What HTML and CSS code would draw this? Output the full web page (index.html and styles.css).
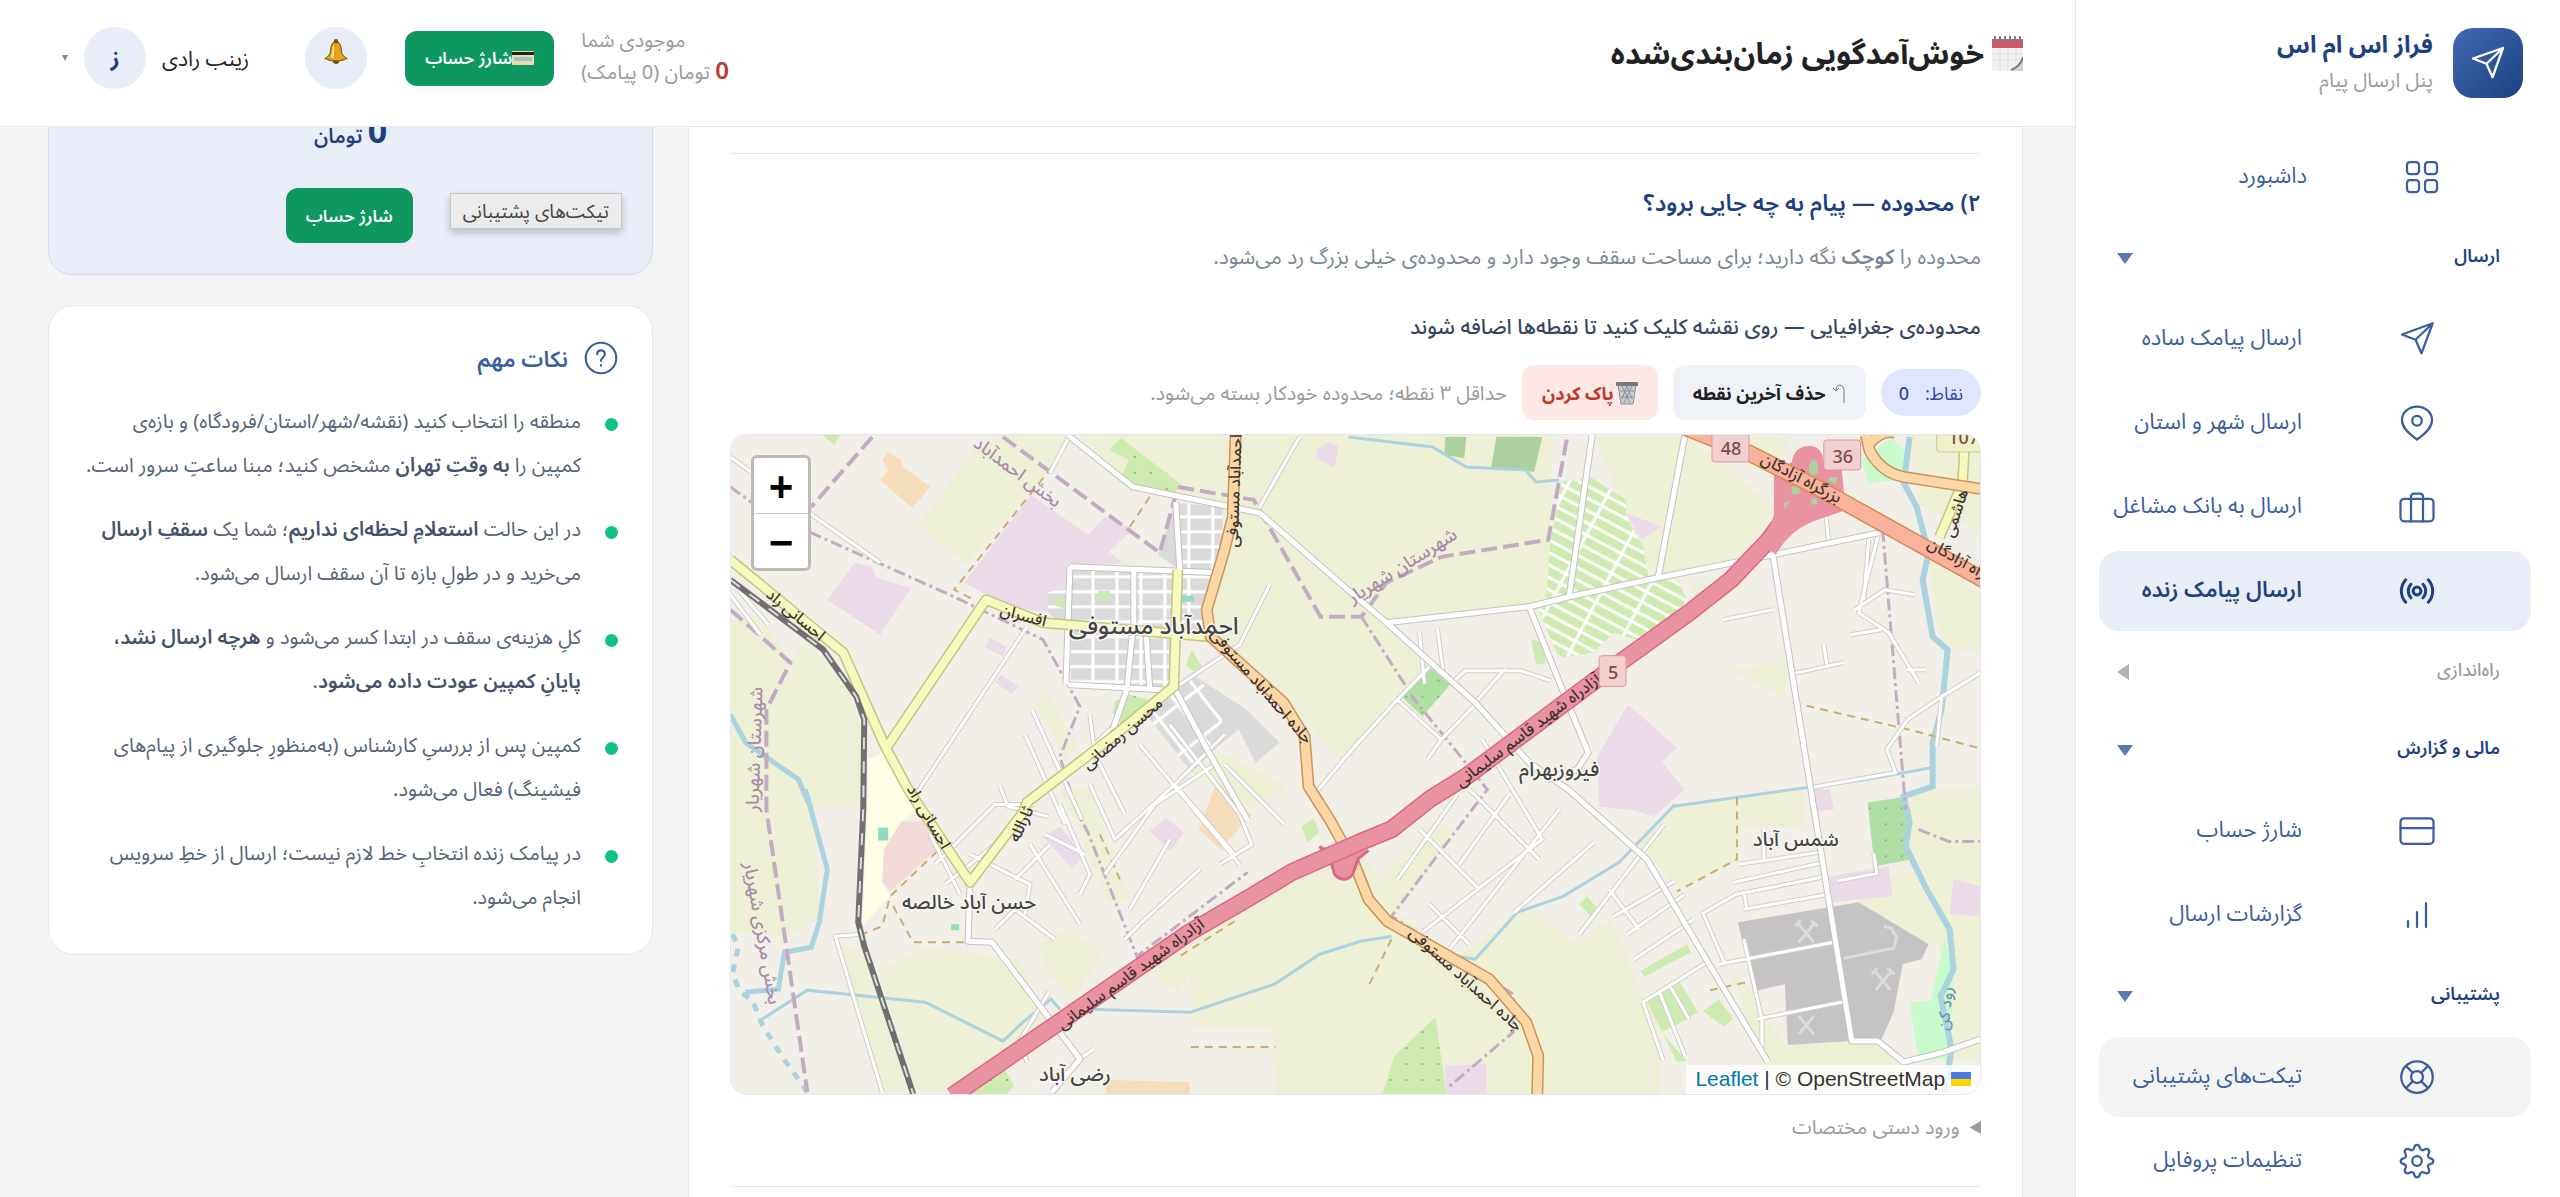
FILE: index.html
```html
<!DOCTYPE html>
<html lang="fa" dir="rtl">
<head>
    <meta charset="utf-8">
    <title>خوش‌آمدگویی زمان‌بندی‌شده</title>
    <meta name="viewport" content="width=device-width, initial-scale=1">
    <link rel="stylesheet" href="styles.css">
</head>
<body>
    <aside class="sidebar">
        <div class="brand">
            <div class="brand-logo">
                <svg viewBox="0 0 24 24" class="icon"><path d="M22 2 2 9l9 3.500 4 9z M22 2 11 12.500"/></svg>
            </div>
            <div>
                <div class="brand-name">فراز اس ام اس</div>
                <div class="brand-sub">پنل ارسال پیام</div>
            </div>
        </div>

        <nav class="nav">
            <a href="#" class="nav-item nav-home">
                <svg viewBox="0 0 24 24" class="icon"><rect x="2" y="2" width="8" height="8" rx="2"/><rect x="14" y="2" width="8" height="8" rx="2"/><rect x="2" y="14" width="8" height="8" rx="2"/><rect x="14" y="14" width="8" height="8" rx="2"/></svg>
                <span>داشبورد</span>
            </a>

            <button type="button" class="nav-group"><span>ارسال</span><i class="caret"></i></button>
            <a href="#" class="nav-item">
                <svg viewBox="0 0 24 24" class="icon"><path d="M22.500 1.500 2 9l9 3.500 4 9z M22.500 1.500 11 12.500"/></svg>
                <span>ارسال پیامک ساده</span>
            </a>
            <a href="#" class="nav-item">
                <svg viewBox="0 0 24 24" class="icon"><path d="M12 23c5-3.500 10-7.500 10-13a10 9 0 0 0-20 0c0 5.500 5 9.500 10 13z"/><circle cx="12" cy="10.500" r="3.200"/></svg>
                <span>ارسال شهر و استان</span>
            </a>
            <a href="#" class="nav-item">
                <svg viewBox="0 0 24 24" class="icon"><rect x="1" y="6.500" width="22" height="15" rx="2.500"/><path d="M8 21.500V5a2 2 0 0 1 2-2h4a2 2 0 0 1 2 2v16.500"/></svg>
                <span>ارسال به بانک مشاغل</span>
            </a>
            <a href="#" class="nav-item active">
                <svg viewBox="0 0 24 24" class="icon"><circle cx="12" cy="12" r="2.600"/><path d="M8 7.500a6.500 6.500 0 0 0 0 9M16 7.500a6.500 6.500 0 0 1 0 9M4.500 4.500a11 11 0 0 0 0 15M19.500 4.500a11 11 0 0 1 0 15"/></svg>
                <span>ارسال پیامک زنده</span>
            </a>

            <button type="button" class="nav-group closed"><span>راه‌اندازی</span><i class="caret"></i></button>

            <button type="button" class="nav-group"><span>مالی و گزارش</span><i class="caret"></i></button>
            <a href="#" class="nav-item">
                <svg viewBox="0 0 24 24" class="icon"><rect x="1" y="3.500" width="22" height="17" rx="2.500"/><path d="M1 10h22"/></svg>
                <span>شارژ حساب</span>
            </a>
            <a href="#" class="nav-item">
                <svg viewBox="0 0 24 24" class="icon"><path d="M18 4v16M12 10v10M6 16v4"/></svg>
                <span>گزارشات ارسال</span>
            </a>

            <button type="button" class="nav-group"><span>پشتیبانی</span><i class="caret"></i></button>
            <a href="#" class="nav-item hover">
                <svg viewBox="0 0 24 24" class="icon"><circle cx="12" cy="12" r="10.500"/><circle cx="12" cy="12" r="4"/><path d="m4.700 4.700 4.400 4.400M14.900 9.100l4.400-4.400M14.900 14.900l4.400 4.400M9.100 14.900l-4.400 4.400"/></svg>
                <span>تیکت‌های پشتیبانی</span>
            </a>
            <a href="#" class="nav-item">
                <svg viewBox="0 0 24 24" class="icon"><circle cx="12" cy="12" r="3.200"/><path d="M10 3.500c.5-3 3.500-3 4 0 .3 1.200 1.600 1.700 2.600 1 2.600-1.600 4.500.4 3 3-.7 1-.1 2.300 1 2.600 3 .6 3 3.400 0 4-1.100.3-1.700 1.500-1 2.600 1.500 2.600-.4 4.500-3 3-1-.7-2.300-.1-2.600 1-.6 3-3.400 3-4 0-.3-1.100-1.500-1.700-2.600-1-2.600 1.500-4.500-.4-3-3 .7-1 .1-2.300-1-2.600-3-.6-3-3.400 0-4 1.100-.3 1.700-1.500 1-2.600-1.500-2.600.4-4.600 3-3 1 .7 2.300.2 2.600-1z"/></svg>
                <span>تنظیمات پروفایل</span>
            </a>
        </nav>
    </aside>

    <div class="page">
        <header class="topbar">
            <h1 class="page-title">
                <svg viewBox="0 0 31 35" class="calendar"><path fill="#f0f1f1" d="M0 6h31v29H0z"/><path fill="#cf5867" d="M0 3h31v9H0z"/><path stroke="#6d8397" stroke-width="2" d="M3 0v6M8 0v6M13 0v6M18 0v6M23 0v6M28 0v6"/><path stroke="#dcdfe1" d="M0 18h31M0 24h31M8 13v21M16 13v21M24 13v21"/><path fill="#cfd2d4" d="M31 22 20 35h11z"/><path stroke="#777" stroke-width="2" d="M31 21c-2 8-6 10-12 13"/></svg>
                خوش‌آمدگویی زمان‌بندی‌شده
            </h1>
            <div class="account">
                <div class="credit">
                    <div>موجودی شما</div>
                    <div><b>0</b> تومان (0 پیامک)</div>
                </div>
                <button type="button" class="btn btn-green">
                    <svg viewBox="0 0 22 14" class="card-icon"><rect width="22" height="14" rx="1" fill="#e6dfa9"/><path fill="#222" d="M0 1h22v3H0z"/><path fill="#a6c0cf" d="M2 6h18v4H2z"/></svg>شارژ حساب
                </button>
                <button type="button" class="bell" aria-label="اعلان‌ها">
                    <svg viewBox="0 0 24 24"><path fill="#e3a21a" stroke="#8a5a12" d="M12 2c-4 1-5 5-5 9 0 3-2 5-5 7 5 3 15 3 20 0-3-2-5-4-5-7 0-4-1-8-5-9z"/><path fill="#fbe08a" d="M10 5c-2 3-1 8-3 12l3 1c0-4 1-9 0-13z"/><circle cx="12" cy="2" r="2" fill="#7a4c10"/><path fill="#7a4c10" d="M9 20h6c0 4-6 4-6 0z"/></svg>
                </button>
                <button type="button" class="user">
                    <span>زینب رادی</span>
                    <span class="avatar">ز</span>
                    <i class="user-caret"></i>
                </button>
            </div>
        </header>

        <div class="content">
            <main class="panel">
                <section class="step">
                    <h2>۲) محدوده — پیام به چه جایی برود؟</h2>
                    <p class="lead">محدوده را <b>کوچک</b> نگه دارید؛ برای مساحت سقف وجود دارد و محدوده‌ی خیلی بزرگ رد می‌شود.</p>
                    <p class="map-label">محدوده‌ی جغرافیایی — روی نقشه کلیک کنید تا نقطه‌ها اضافه شوند</p>
                    <div class="tools">
                        <span class="badge">نقاط: <b>0</b></span>
                        <button type="button" class="btn btn-soft">
                            <svg viewBox="0 0 14 20" class="undo"><path d="M12 20V7c0-6-8-7-8 0M1 5l3 3 3-3"/></svg>حذف آخرین نقطه
                        </button>
                        <button type="button" class="btn btn-danger">
                            <svg viewBox="0 0 22 24" class="trash"><path fill="#c9cdd0" stroke="#8b9094" d="m2 4 3 19h12l3-19z"/><path stroke="#8b9094" d="m6 5 8 17M11 5l5 13M16 5 8 22M11 5 6 18M4 10h14M5 16h12"/><rect x="0" y="1" width="22" height="4" rx="1" fill="#73797e"/></svg>پاک کردن
                        </button>
                        <span class="hint">حداقل ۳ نقطه؛ محدوده خودکار بسته می‌شود.</span>
                    </div>

                    <div class="map">
                        <svg class="map-canvas" viewBox="0 0 1252 660" preserveAspectRatio="xMidYMid slice">
                            <defs>
                                <pattern id="dots" width="16" height="16" patternUnits="userSpaceOnUse"><circle cx="5" cy="6" r="1" fill="#6fae5f"/></pattern>
                                <pattern id="streets" width="24" height="15" patternUnits="userSpaceOnUse"><path d="M0 7h24M3 0v15" stroke="#fff" stroke-width="3"/></pattern>
                                <pattern id="plots" width="40" height="11" patternUnits="userSpaceOnUse" patternTransform="rotate(28)"><path d="M0 5h40M4 0v11" stroke="#fff" stroke-width="3"/></pattern>
                                <pattern id="lanes" width="40" height="24" patternUnits="userSpaceOnUse" patternTransform="rotate(52)"><path d="M0 5h40M9 0v24" stroke="#fff" stroke-width="3"/></pattern>
                            </defs>
                            <rect width="1252" height="660" fill="#f2efe9"/>

                            <!-- farmland -->
                            <g fill="#eef0d5">
                                <path d="M187 90 243 17 270 0h75l-30 40-22 26-57 64zM350 0h155v82l-58-20-44-10z"/>
                                <path d="M505 0h317v165l-17 10-145 15 40 45-30 35-59 58-36-43-88-83-6-30 26-80z"/>
                                <path d="M0 185l30-5 30 48 15-23 43 50 14 45-2 72H85v43l6 67-35 20-56-4z"/>
                                <path d="M147 535l48-22 95 12 15 37 15 23-20 25-87 48h-26zM110 508l24 14 44 136h-26z"/>
                                <path d="M631 418 545 455 466 490l-11 25-44 15 36 28 14-18v52l81 3 4 65h384v-35l2-25-17-40-35-75-32 25-43-35-15 3-65 47-60-50z"/>
                                <path d="M910 408l36-36 60-9 69-8v37h-64v33l-61 30-32-35zM706 387l19 8-57 85-23-30z"/>
                                <path d="M1000 530l20 25 37 57 98-7 25 50h-140zM1180 355h72v270h-30l-5-80-19-90-18-40zM1130 468l35-30 20 0 31 65-20 10z"/>
                                <path d="M865 2h95l85 68-15 30-25 30-80 15zM1180 0h72v98l-62-28zM1000 235l58-8v37z"/>
                                <path d="M310 510l28-16 36 24-30 45-25-20zM460 338l29-20 69 34-36 23zM305 270l12-10 30 50-12 16zM330 355h30l40 110-20 5z"/>
                                <path d="M962 2h100l-20 40-40-20zM1200 120l52 40v60l-40-10zM960 150l50 0-35 35z"/>
                            </g>

                            <!-- built-up and industrial areas -->
                            <g fill="#ebdbe8">
                                <path d="M301 60l57 40 17-18 28 13-24 22 14 11-53 4-4 20-18 6v20l-41-6-43-24zM124 128l18 4 4 11 35 10-31 47-53-35z"/>
                                <path d="M260 203l17 9-4 10-18-10zM271 240l17 12-6 8-17-12zM897 78l36 14-21 13zM899 270l49 43-15 15 23 27-31 27-20-6-35-4-2-50z"/>
                                <path d="M1100 442l60-10 4 30-60 6zM1225 445l27 7v30l-31-2zM716 632l41-2v30h-40zM436 383l18 15-14 19-20-20zM330 392l24 30-12 12-29-32zM587 15l12-8 10 4-4 22-18-10zM1085 355h16l4 20-18 2z"/>
                            </g>
                            <g fill="#dadada">
                                <path d="M340 132l149 6-12 34 3 30-28 3-6 50-108-3-2-60-18-14v-20l18-6z"/>
                                <path d="M446 67l47 6v45l-4 19-39-2-22-15zM448 252l18-10 51 33 33 33-24 20-17-33-22 18-25 25-47-60 21-16z"/>
                            </g>
                            <path d="M340 132l149 6-12 34 3 30-28 3-6 50-108-3-2-60-18-14v-20l18-6zM446 67l47 6v45l-4 19-39-2z" fill="url(#streets)"/>
                            <path d="M448 252l18-10 30 30-10 40-25 25-47-60z" fill="url(#lanes)"/>
                            <path d="M138 325l16-7 33 57-16 13-17 27-2 33 8 14-28 30 6-132z" fill="#ffffe5"/>
                            <path d="M171 387h22l14 28-47 42-8-9 2-33z" fill="#f2dad9"/>
                            <path d="M158 17l13 8 2 7 27 20-18 21-32-28 8-10-6-10zM487 347l18 18 17 15-31 35-22-20zM377 646l83 2v12h-84z" fill="#f5dcba"/>
                            <path d="M1009 488l121-20 70 42-7 15-19 5-9 48-12 27-94 6-3-61-31 7z" fill="#c5c3c3"/>

                            <!-- orchards, parks -->
                            <g>
                                <path fill="#cdebb0" d="M391 3l61 47-8 8-45-8-6-12 6-13-20-10zM399 260l19 5-11 20-14 7-10-14 2-11zM462 215l11 18-9 4-8-7zM706 583l11 77h-64l12-38zM273 632l11 20-7 8h-41zM911 537l47-27 4 8-46 24zM918 568l33-20 18 30-23 14-14 6 26 29-10 1zM974 577l16-12 14 20-9 8zM850 470l8-8 10 12-6 8zM325 162l10 2v10l-10-3zM368 156h12v8h-12zM802 205l11 2 4 21-10 2zM572 392l12-8 6 14-12 10zM92 0h18l-6 10z"/>
                                <path fill="#cdebb0" d="M832 47l29-5 36 23v17l17 30 6 33h28l14 27-48 35-29-9-22 20-33 5-21-48 8-10 4-57z"/>
                                <path fill="#aedfa3" d="M700 232l21 18-28 32-21-20zM1139 368l33-5 9 25-4 20 7 17-38 7-4-34z"/>
                                <path fill="#add19e" d="M716 2h21l-2 21-20-3zM767 2h46l-8 35-43-5z"/>
                                <path fill="#c8facc" d="M1162 3l17 15-8 27-32 3-6-23zM1216 505l9 33-4 87-31 2-9-59 21-1z"/>
                                <path fill="#8fdcc0" d="M148 393h10v13h-10zM452 161h12v6h-12zM221 490h8v6h-8z"/>
                            </g>
                            <path fill="url(#dots)" d="M391 3l61 47-8 8-45-8-6-12 6-13zM399 260l19 5-11 20-14 7-10-14zM706 583l11 77h-64l12-38zM273 632l11 20-7 8h-41zM700 232l21 18-28 32-21-20zM1139 368l33-5 9 25-4 20 7 17-38 7z"/>
                            <path fill="url(#plots)" d="M832 47l29-5 36 23v17l17 30 6 33h28l14 27-48 35-29-9-22 20-33 5-21-48 8-10 4-57z"/>

                            <!-- water -->
                            <g class="water">
                                <path d="M0 280l15 28 53 37 13 30-6-20 22 80-8 53-8 25-27 5-6 37-33 3" stroke-width="5"/>
                                <path d="M32 585l45-29 118 12 78 39 20-19 28-23 9 10M360 575l101 3 84-28 45-30 41-13 31-5M619 2l84 10 34 20 59 3 11 12 23-2M943 372l135-19 60-8 66-12M946 370l-56 58-56 34-46 16-42 47-19-3"/>
                                <path d="M1181 2l-6 46 13 24 12 46-6 27 10 57 15 13-6 60-9 33v44l-29 10 6 26-4 24 21 43 23 40 4 40-13 27 11 53-7 43" stroke-width="6"/>
                                <path d="M2 500l6 12-6 28 8 18 12 8 10 25 20 32 18 25 8 12" stroke-width="5" stroke-dasharray="8 8"/>
                            </g>

                            <!-- administrative borders -->
                            <g class="border">
                                <path d="M142 2 81 72M273 2l157 116 18-66 76 13 67 117h41l25-34 55-26 107-17 19-103M0 175l60 53-24 47v100l41 283"/>
                                <path class="thin" d="M0 52l22 16 59 30 143 64 89 43 37 67-20 50 16 53 12 23 49 124 111-84M632 182l53 83 73 90-96 127 122 78v38l-67 57M1154 95l23 280M1190 395l30 12h32"/>
                            </g>
                            <path class="track" d="M322 32l-98 123 20 10M207 417l-47 45-8 30-20 8M163 472l20 36h55M461 613h85M1064 268l120 28 68 18M1008 363v62l-60 32M370 400l20 45M662 505l-22 45M981 556l42-9M505 487l-55 35M420 62l-20 30"/>

                            <!-- minor streets, drawn twice: casing then fill -->
                            <g class="road">
                                <path id="minor" d="M340 0l-20 38M530 72l40-70M297 192 187 358M0 22l22 16 128 90M132 500l-27 2 47 156M611 328l57-63 32-33M668 265l44 40 36-37M712 305l-14 20M721 250l15-14 55 0 30 10M583 362l48-57M746 268l30-34M690 197l5 52M708 194l6 44M1083 353l84-15-9-23 21-30 34-23 39-24M1213 262l-5 50M1044 175l-50 10M1060 240l55-12M1098 230l-3-20M1150 98l-20 80 30 20 30 50M1140 105l-5 60M1100 108l-3-30M1126 175l30-20 30 5M1122 200l30-5M1198 235h-20M693 498l120-93-60-100M720 515l110-140M668 445l60-85M690 395l60 60M740 355l70 70M700 470l40 40M730 430l50-70M785 478l80-70M850 500l85-110M880 455l30 40M885 482l60-35M898 500l58-40M905 525l60-40M914 568l64-40M914 568l20 58M930 557l26 65M940 550l20 35M1010 430l80-12M1005 448l90-20M1008 460l90-18M1015 475l85-15M1009 459l-35 20 22 51M1018 475l-3-18M990 530l115-22M1028 585l90-18M1015 505l18 80v30M1108 447l40-8-3-20M1035 425v-32M410 310l50 60 50 60M440 290l70 90 12 30-32 20M495 330l60 60M360 350l25 55 60-55 50-50M445 350l60 70M375 440l50-70 60-40M400 475l40-70M395 505l20-20 55-50M300 410l50 80M315 400l40 20M330 370l30 70-10 20M205 430l60-60 40 0M215 450l50-40M200 400l30 60M285 445l35-35M265 495l20-20 40 30M240 420l60 30-5 30M297 628l-8-20 30-50M350 625l14-10M270 352l8 20 40 10M302 275l50 110M295 300l40 90M360 280l5 40 30 60M450 250l60-40 30-60M365 310l20-20M0 160l30 40M8 155l30 35"/>
                                <use href="#minor" class="road-fill"/>
                            </g>
                            <g class="road wide">
                                <path id="streets-main" d="M338 0l65 52 127 26 85 74 42 36 89 80 54 60 39 27 79 70 61 103 60 100M863 0l-23 162-40 10-143 16M800 172l36 90 23 56-11 17-30 10M956 0l-27 143 115-23 106-22M840 162l89-19M1044 120l38 235 41 252h26l26 21 40-10 37-13M240 448l-2 59 24 1 88 117-28 33M340 132l149 6M340 132l-4 118M446 67l4 68M403 195l-6 60-14 40M338 250l106 6M416 195l4 60M404 132v60M446 256l32 60 40 70"/>
                                <use href="#streets-main" class="road-fill"/>
                            </g>

                            <!-- secondary, primary, railway, motorway -->
                            <g class="secondary">
                                <path id="second" d="M0 125l113 93 42 94 23 43 62 93 53-70 4-10 86-66 61-50 4-117M157 312l99-147 57 23 25 2 143 12M1236 10l-2 38-23 54"/>
                                <use href="#second" class="road-fill"/>
                            </g>
                            <path class="rail" d="M0 145l93 70 33 47 8 23-1 90-5 113 6 24 49 148"/>
                            <path class="rail-dash" d="M0 145l93 70 33 47 8 23-1 90-5 113 6 24 49 148"/>
                            <g class="primary">
                                <path id="first" d="M506 0l-3 82-9 36-17 57 4 27 73 66 21 34 4 50 21 33 25 45 14 35 19 22 37 21 65 37 37 43 12 34-1 40M1137 0l4 16q12 22 34 26l77 12M1141 8q14-14 26-10"/>
                                <use href="#first" class="road-fill"/>
                            </g>
                            <path d="M590 412l10 10 5 18q10 10 18 0l6-16 10-8" fill="#e892a2" stroke="#de6685" stroke-width="3"/>
                            <path class="motor-edge" d="M222 662l116-80 122-84 62-36 40-24 68-30 32-13 38-30 37-23 126-94 97-70 42-33 38-40 17-23"/>
                            <path class="motor" d="M222 662l116-80 122-84 62-36 40-24 68-30 32-13 38-30 37-23 126-94 97-70 42-33 38-40 17-23"/>
                            <path d="M1045 38v42q-2 12-14 28l16 12q12-22 34-32l36-13-4-40q-6-14-18-8-2-16-14-16-16 0-18 16z" fill="#e892a2"/>
                            <path d="M1085 24q6 4 4 14l-6 3q-7-10 2-17zM1062 52l8-2 2 8-8 2zM1101 42l8 0-2 7-8-3zM1055 68l6-2-5 9zM1082 64l6-1v6l-5 1z" fill="#add19e"/>
                            <path d="M940-14l80 32 75 38 165 92" fill="none" stroke="#d98a4f" stroke-width="17"/>
                            <path d="M940-14l80 32 75 38 165 92" fill="none" stroke="#f9b29c" stroke-width="14"/>

                            <!-- quarry marks -->
                            <g stroke="#dddcdc" stroke-width="3" fill="none">
                                <path d="M1070 508l15-18M1085 508l-15-18M1066 492l6-6M1082 486l7 6M1147 556l15-18M1162 556l-15-18M1143 540l6-6M1159 534l7 6M1070 600l15-18M1085 600l-15-18M1115 524l50-10 3-10-5-10-8-2"/>
                            </g>

                            <!-- place names -->
                            <g class="place">
                                <text x="424" y="199" class="big">احمدآباد مستوفی</text>
                                <text x="830" y="342">فیروزبهرام</text>
                                <text x="1067" y="412">شمس آباد</text>
                                <text x="239" y="475">حسن آباد خالصه</text>
                                <text x="345" y="647">رضی آباد</text>
                            </g>
                            <g class="street">
                                <text transform="translate(510 56) rotate(-88)">احمدآباد مستوفی</text>
                                <text transform="translate(528 255) rotate(49)">جاده احمدآباد مستوفی</text>
                                <text transform="translate(733 549) rotate(42)">جاده احمدآباد مستوفی</text>
                                <text transform="translate(292 186) rotate(15)">افسران</text>
                                <text transform="translate(62 184) rotate(40)">احسانی راد</text>
                                <text transform="translate(194 385) rotate(60)">احسانی راد</text>
                                <text transform="translate(396 303) rotate(-41)">محسن رمضانی</text>
                                <text transform="translate(296 392) rotate(-65)">ثارالله</text>
                                <text transform="translate(404 544) rotate(-36)">آزادراه شهید قاسم سلیمانی</text>
                                <text transform="translate(802 300) rotate(-37)">آزادراه شهید قاسم سلیمانی</text>
                                <text transform="translate(1070 48) rotate(28)">بزرگراه آزادگان</text>
                                <text transform="translate(1236 134) rotate(30)">بزرگراه آزادگان</text>
                                <text transform="translate(1232 80) rotate(-72)">هاشمی</text>
                            </g>
                            <g class="county">
                                <text transform="translate(284 42) rotate(37)">بخش احمدآباد</text>
                                <text transform="translate(676 136) rotate(-32)">شهرستان شهریار</text>
                                <text transform="translate(30 315) rotate(-88)">شهرستان شهریار</text>
                                <text transform="translate(26 500) rotate(80)">بخش مرکزی شهریار</text>
                                <text transform="translate(1222 575) rotate(-84)" class="stream">رود کن</text>
                            </g>
                            <g class="shield">
                                <rect x="983" y="-5" width="37" height="32" rx="3"/><text x="1002" y="20">48</text>
                                <rect x="1095" y="5" width="37" height="30" rx="3"/><text x="1114" y="28">36</text>
                                <rect x="870" y="221" width="27" height="31" rx="3"/><text x="884" y="244">5</text>
                                <rect x="1208" y="-14" width="54" height="31" rx="3" class="local"/><text x="1235" y="9">107</text>
                            </g>
                        </svg>
                        <div class="zoom">
                            <button type="button" aria-label="بزرگ‌نمایی">+</button>
                            <button type="button" aria-label="کوچک‌نمایی">−</button>
                        </div>
                        <div class="attribution" dir="ltr">
                            <a href="#">Leaflet</a> | © OpenStreetMap
                            <svg viewBox="0 0 20 14"><path fill="#4c7be1" d="M0 0h20v7H0z"/><path fill="#ffd500" d="M0 7h20v7H0z"/></svg>
                        </div>
                    </div>
                    <details class="manual">
                        <summary>ورود دستی مختصات</summary>
                    </details>
                </section>
                <section class="step"></section>
            </main>

            <div class="side">
                <section class="balance">
                    <div class="amount"><b>0</b> تومان</div>
                    <div class="balance-actions">
                        <span class="tooltip">تیکت‌های پشتیبانی</span>
                        <button type="button" class="btn btn-green">شارژ حساب</button>
                    </div>
                </section>

                <section class="tips">
                    <h3>
                        <svg viewBox="0 0 24 24" class="icon"><circle cx="12" cy="12" r="10.800"/><path d="M9.300 9.300c0-3.600 5.400-3.600 5.400 0 0 2.200-2.700 2.400-2.700 4.700M12 17v.4"/></svg>
                        نکات مهم
                    </h3>
                    <ul>
                        <li>منطقه را انتخاب کنید (نقشه/شهر/استان/فرودگاه) و بازه‌ی<br>کمپین را <b>به وقتِ تهران</b> مشخص کنید؛ مبنا ساعتِ سرور است.</li>
                        <li>در این حالت <b>استعلامِ لحظه‌ای نداریم</b>؛ شما یک <b>سقفِ ارسال</b><br>می‌خرید و در طولِ بازه تا آن سقف ارسال می‌شود.</li>
                        <li>کلِ هزینه‌ی سقف در ابتدا کسر می‌شود و <b>هرچه ارسال نشد،<br>پایانِ کمپین عودت داده می‌شود</b>.</li>
                        <li>کمپین پس از بررسیِ کارشناس (به‌منظورِ جلوگیری از پیام‌های<br>فیشینگ) فعال می‌شود.</li>
                        <li>در پیامک زنده انتخابِ خط لازم نیست؛ ارسال از خطِ سرویس<br>انجام می‌شود.</li>
                    </ul>
                </section>
            </div>
        </div>
    </div>
</body>
</html>
```
FILE: styles.css
```css
:root{
    --navy: #1d4180;
    --blue: #3a5f9f;
    --green: #0f9762;
    --line: #e3e8f0;
    --gray: #9b9b9b;
    --soft: #e8edf7;
}

*{
    box-sizing: border-box;
}

body{
    margin: 0;
    height: 100vh;
    display: flex;
    overflow: hidden;
    background: #f4f4f4;
    color: #222;
    font-family: "Noto Sans", "Noto Sans Arabic", "DejaVu Sans", sans-serif;
    font-size: 20px;
    line-height: 32px;
}

h1, h2, h3, p, ul{
    margin: 0;
    padding: 0;
}

button{
    font: inherit;
    border: 0;
    background: none;
    cursor: pointer;
    white-space: nowrap;
}

a{
    text-decoration: none;
}

b{
    font-weight: 600;
}

.icon{
    width: 36px;
    height: 36px;
    flex: none;
    fill: none;
    stroke: currentColor;
    stroke-width: 1.5;
    stroke-linecap: round;
    stroke-linejoin: round;
}

/* sidebar */
.sidebar{
    width: 485px;
    flex: none;
    padding: 28px 29px 0 23px;
    background: #fff;
    border-left: 1px solid var(--line);
}

.brand{
    display: flex;
    gap: 20px;
    padding: 0 8px 39px 0;
}

.brand-logo{
    width: 70px;
    height: 70px;
    display: grid;
    place-items: center;
    border-radius: 20px;
    color: #fff;
    background: linear-gradient(135deg, #4169b5, #1d4180);
}

.brand-name{
    color: var(--navy);
    font-size: 24px;
    font-weight: bold;
}

.brand-sub{
    margin-top: 4px;
    color: var(--gray);
}

.nav{
    display: flex;
    flex-direction: column;
    gap: 4px;
}

.nav-item{
    height: 80px;
    display: flex;
    flex: none;
    align-items: center;
    gap: 97px;
    padding-right: 96px;
    border-radius: 20px;
    color: var(--blue);
    font-size: 22px;
    white-space: nowrap;
}

.nav-item span,
.nav-group span{
    padding-bottom: 6px;
}

.nav-home{
    padding-right: 91px;
}

.nav-item.active{
    background: var(--soft);
    color: var(--navy);
    font-weight: 600;
}

.nav-item.active .icon{
    stroke-width: 2;
}

.nav-item.hover{
    background: #f4f4f4;
}

.nav-group{
    height: 74px;
    flex: none;
    display: flex;
    align-items: center;
    justify-content: space-between;
    padding: 0 31px 0 18px;
    color: var(--navy);
    font-size: 18px;
    font-weight: 600;
}

.caret{
    border: 8px solid transparent;
    border-top: 11px solid #5b7bb0;
    border-bottom: 0;
}

.nav-group.closed{
    color: var(--gray);
    font-weight: 500;
}

.nav-group.closed .caret{
    border: 8px solid transparent;
    border-right: 12px solid #b3b3b3;
    border-left: 0;
}

/* top bar */
.page{
    flex: 1;
    min-width: 0;
    display: flex;
    flex-direction: column;
}

.topbar{
    flex: none;
    display: flex;
    justify-content: space-between;
    padding: 25px 52px 35px 62px;
    background: #fff;
    border-bottom: 1px solid var(--line);
}

.page-title{
    display: flex;
    align-items: center;
    align-self: flex-start;
    gap: 8px;
    font-size: 30px;
    font-weight: bold;
    line-height: 56px;
}

.calendar{
    width: 31px;
    height: 35px;
    fill: none;
}

.account{
    display: flex;
    align-items: center;
    color: var(--gray);
}

.credit{
    margin: 0 0 4px 27px;
    line-height: 30px;
    text-align: left;
}

.credit b{
    color: #c0392b;
    font-size: 24px;
}

.btn{
    height: 55px;
    display: flex;
    align-items: center;
    justify-content: center;
    padding: 0 20px;
    border-radius: 12px;
    font-size: 18px;
    font-weight: bold;
}

.btn-green{
    background: var(--green);
    color: #fff;
    font-size: 17px;
    font-weight: 600;
}

.card-icon{
    width: 22px;
    height: 14px;
}

.bell{
    width: 62px;
    height: 62px;
    margin: 0 38px 0 56px;
    padding: 0 0 12px;
    display: grid;
    place-items: center;
    border-radius: 50%;
    background: var(--soft);
}

.bell svg{
    width: 26px;
    height: 26px;
}

.user{
    display: flex;
    align-items: center;
    gap: 16px;
    padding: 0;
    color: #222;
    font-size: 21px;
}

.avatar{
    width: 62px;
    height: 62px;
    border-radius: 50%;
    background: var(--soft);
    color: var(--navy);
    font-size: 22px;
    font-weight: bold;
    line-height: 60px;
}

.user-caret{
    border: 3px solid transparent;
    border-top: 6px solid #888;
    border-bottom: 0;
}

/* content, scrolled part of the way down */
.content{
    flex: 1;
    min-height: 0;
    overflow: hidden;
    display: flex;
    align-items: flex-start;
    gap: 35px;
    padding: 0 52px 0 48px;
}

.panel{
    flex: 1;
    min-width: 0;
    padding: 26px 41px 60px;
    background: #fff;
    border: 1px solid var(--line);
    border-top: 0;
}

.step{
    border-top: 1px solid var(--line);
    padding: 32px 0 43px;
}

.step h2{
    color: var(--navy);
    font-size: 23px;
    font-weight: 600;
}

.lead{
    margin-top: 22px;
    color: #7a8798;
    font-size: 21px;
}

.map-label{
    margin-top: 38px;
    color: #35475f;
    font-size: 21px;
    font-weight: 500;
}

.tools{
    display: flex;
    align-items: center;
    gap: 15px;
    margin: 23px 0 14px;
}

.badge{
    height: 47px;
    display: flex;
    align-items: center;
    gap: 16px;
    padding: 0 18px;
    border-radius: 24px;
    background: #e0e6ff;
    color: #3646a8;
    font-size: 18px;
}

.badge b{
    font-weight: 500;
}

.btn-soft{
    background: #eff3f8;
    color: #222;
}

.undo{
    width: 14px;
    height: 20px;
    margin-left: 6px;
    fill: none;
    stroke: #777;
}

.btn-danger{
    background: #fde8e6;
    color: #c0392b;
}

.trash{
    width: 22px;
    height: 24px;
    margin-left: 2px;
    fill: none;
}

.hint{
    color: var(--gray);
}

/* map */
.map{
    position: relative;
    height: 661px;
    overflow: hidden;
    border: 1px solid var(--line);
    border-radius: 16px;
}

.map-canvas{
    display: block;
    width: 100%;
    height: 100%;
}

.map-canvas text{
    font-family: "Noto Sans", "Noto Sans Arabic", "DejaVu Sans", sans-serif;
    text-anchor: middle;
}

.water{
    fill: none;
    stroke: #aad3df;
    stroke-width: 3;
}

.border{
    fill: none;
    stroke: #c3acc3;
    stroke-width: 4;
    stroke-dasharray: 16 6;
}

.border .thin{
    stroke-width: 3;
    stroke-dasharray: 12 4 3 4;
}

.track{
    fill: none;
    stroke: #c9ad72;
    stroke-width: 2;
    stroke-dasharray: 8 6;
}

.road{
    fill: none;
    stroke: #d0cdca;
    stroke-width: 5;
    stroke-linejoin: round;
}

.road-fill{
    stroke: #fff;
    stroke-width: 3;
}

.wide{
    stroke: #c4c2c0;
    stroke-width: 7;
}

.wide .road-fill{
    stroke-width: 5;
}

.secondary{
    fill: none;
    stroke: #c3c67c;
    stroke-width: 11;
    stroke-linejoin: round;
}

.secondary .road-fill{
    stroke: #f7fabf;
    stroke-width: 8;
}

.primary{
    fill: none;
    stroke: #c9945a;
    stroke-width: 12;
    stroke-linejoin: round;
}

.primary .road-fill{
    stroke: #fcd6a4;
    stroke-width: 9;
}

.rail{
    fill: none;
    stroke: #707070;
    stroke-width: 6;
}

.rail-dash{
    fill: none;
    stroke: #ddd;
    stroke-width: 2;
    stroke-dasharray: 12 12;
}

.motor-edge{
    fill: none;
    stroke: #de6685;
    stroke-width: 18;
    stroke-linejoin: round;
}

.motor{
    fill: none;
    stroke: #e892a2;
    stroke-width: 15;
    stroke-linejoin: round;
}

.place text{
    fill: #444;
    stroke: #f8f6f2;
    stroke-width: 3;
    paint-order: stroke;
    font-size: 20px;
    font-weight: 500;
}

.place .big{
    font-size: 24px;
}

.street{
    fill: #3d3230;
    font-size: 16px;
    font-weight: 500;
}

.county{
    fill: #a98bab;
    font-size: 18px;
    font-weight: 500;
}

.stream{
    fill: #6d93b8;
    font-size: 16px;
}

.shield rect{
    fill: #f3d0d0;
    stroke: #dd9a9a;
}

.shield .local{
    fill: #eef0c8;
    stroke: #c9cc96;
}

.shield text{
    fill: #7d4b4b;
    font-size: 18px;
    font-weight: 500;
}

.zoom{
    position: absolute;
    top: 20px;
    left: 20px;
    width: 60px;
    border: 3px solid #bdbab5;
    border-radius: 6px;
    background: #fff;
    overflow: hidden;
}

.zoom button{
    display: block;
    width: 100%;
    height: 55px;
    padding: 0;
    font: bold 42px/58px "Liberation Sans", sans-serif;
    color: #000;
}

.zoom button + button{
    border-top: 1px solid #ccc;
}

.attribution{
    position: absolute;
    right: 0;
    bottom: 0;
    height: 29px;
    padding: 0 9px;
    background: rgba(255, 255, 255, .8);
    color: #333;
    font: 21px/28px "Liberation Sans", sans-serif;
}

.attribution a{
    color: #0078a8;
}

.attribution svg{
    width: 20px;
    height: 14px;
}

.manual{
    margin-top: 16px;
    color: var(--gray);
}

/* side column */
.side{
    width: 605px;
    flex: none;
}

.balance{
    margin-top: -30px;
    padding: 12px 30px 31px;
    border: 1px solid #cfdcf2;
    border-radius: 24px;
    background: var(--soft);
    color: var(--navy);
}

.amount{
    text-align: center;
    font-weight: 600;
    line-height: 40px;
}

.amount b{
    font-size: 34px;
    font-weight: bold;
}

.balance-actions{
    display: flex;
    align-items: flex-start;
    gap: 37px;
    margin-top: 32px;
}

.tooltip{
    margin-top: 5px;
    padding: 0 12px;
    border: 1px solid #c6c6c6;
    background: #ebebeb;
    color: #444;
    font-size: 19px;
    line-height: 34px;
    box-shadow: 0 4px 8px rgba(0, 0, 0, .2);
}

.tips{
    margin-top: 30px;
    padding: 32px 34px 35px;
    background: #fff;
    border: 1px solid var(--line);
    border-radius: 26px;
}

.tips h3{
    display: flex;
    align-items: center;
    gap: 16px;
    color: var(--blue);
    font-size: 22px;
    font-weight: 600;
    line-height: 40px;
}

.tips .icon{
    width: 34px;
    height: 34px;
}

.tips ul{
    display: grid;
    gap: 20px;
    margin-top: 21px;
    list-style: none;
    color: #566479;
    line-height: 44px;
    white-space: nowrap;
}

.tips li{
    position: relative;
    padding-right: 37px;
}

.tips li::before{
    content: "";
    position: absolute;
    top: 19px;
    right: 0;
    width: 13px;
    height: 13px;
    border-radius: 50%;
    background: #10c182;
}

.tips b{
    color: #42536b;
}
```
